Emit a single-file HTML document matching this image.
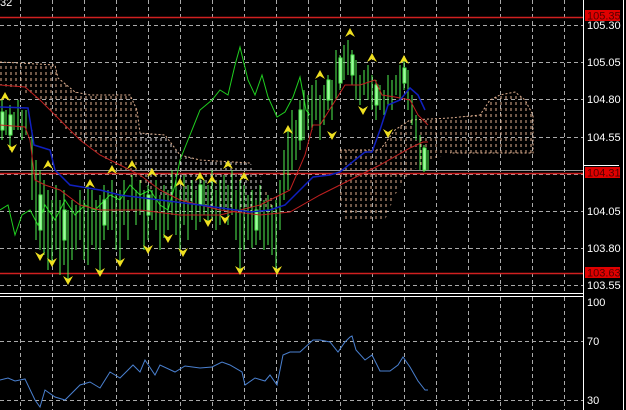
<!DOCTYPE html>
<html><head><style>
html,body{margin:0;padding:0;background:#000;width:626px;height:410px;overflow:hidden}
svg{display:block}
text{font-family:"Liberation Sans",sans-serif;font-size:11px}
</style></head><body>
<svg width="626" height="410" xmlns="http://www.w3.org/2000/svg">
<defs>
<pattern id="cl" width="5" height="6" patternUnits="userSpaceOnUse"><line x1="1" y1="0" x2="1" y2="3" stroke="#e0b090" stroke-width="1"/></pattern>
<pattern id="cw" width="5" height="6" patternUnits="userSpaceOnUse"><line x1="1" y1="0" x2="1" y2="3" stroke="#d8d0d0" stroke-width="1"/></pattern>
</defs>
<rect width="626" height="410" fill="#000"/>
<g stroke="#aaa" stroke-width="1" stroke-dasharray="4,3">
<path d="M20.5 0V292M52.5 0V292M84.5 0V292M116.5 0V292M148.5 0V292M180.5 0V292M212.5 0V292M244.5 0V292M276.5 0V292M308.5 0V292M340.5 0V292M372.5 0V292M404.5 0V292M436.5 0V292M468.5 0V292M500.5 0V292M532.5 0V292M564.5 0V292"/>
<path d="M20.5 297V410M52.5 297V410M84.5 297V410M116.5 297V410M148.5 297V410M180.5 297V410M212.5 297V410M244.5 297V410M276.5 297V410M308.5 297V410M340.5 297V410M372.5 297V410M404.5 297V410M436.5 297V410M468.5 297V410M500.5 297V410M532.5 297V410M564.5 297V410"/>
<path d="M0 25.5H583M0 62.5H583M0 99.5H583M0 137.5H583M0 174.5H583M0 211.5H583M0 248.5H583M0 285.5H583M0 341.5H583M0 400.5H583"/>
</g>
<polygon points="0,62 55,65 58,78 75,92 90,95 130,95 137,110 140,133 165,135 180,155 200,160 250,163 258,175 265,190 280,205 255,212 200,200 160,195 120,170 100,155 80,140 60,125 40,100 20,90 0,85" fill="url(#cl)"/>
<polygon points="140,133 165,135 180,155 200,160 250,163 262,178 265,200 250,212 200,205 160,195 140,175 135,150" fill="url(#cw)"/>
<polygon points="340,150 380,150 395,130 410,120 450,118 480,115 490,100 500,95 515,92 525,100 533,115 533,153 450,153 430,160 410,172 395,195 385,220 345,220 340,200" fill="url(#cl)"/>
<polyline points="340,150 380,150 395,130 410,120 450,118 480,115 490,100 500,95 515,92 525,100 533,115 533,153 450,153" fill="none" stroke="#e0b090" stroke-width="1" stroke-dasharray="2,2"/>
<polyline points="0,62 55,65 58,78 75,92 90,95 130,95 137,110 140,133 165,135 180,155 200,160 250,163" fill="none" stroke="#e0b090" stroke-width="1" stroke-dasharray="2,2"/>
<path d="M0 17.5H583M0 273.5H583" stroke="#d02020" stroke-width="1.5"/>
<path d="M0 170.5H583" stroke="#999" stroke-width="1"/>
<path d="M0 173.5H583" stroke="#d02020" stroke-width="1.5"/>
<polyline points="0,210 8,205 15,235 22,215 30,210 38,225 45,205 55,220 65,200 75,215 85,205 95,210 110,195 120,200 130,185 140,195 150,190 160,205 168,210 175,185 180,160 190,135 200,110 212,100 220,90 228,95 235,65 240,47 248,80 255,95 262,75 268,97 277,117 285,112 293,97 300,77 306,110 310,115" fill="none" stroke="#20d020" stroke-width="1"/>
<g stroke="#50f050" stroke-width="1">
<path d="M2 100V140M6 110V135M10 105V150M14 112V130M18 100V130M22 110V140M26 110V135M32 130V200M36 160V240M40 170V250M44 180V255M48 190V270M52 200V262M56 185V250M60 200V275M64 190V265M68 210V280M72 200V260M76 205V250M80 190V240M84 200V260M88 185V265M92 190V245M96 200V250M100 195V272M104 185V240M108 190V230M112 180V230M116 195V250M120 190V262M124 180V225M128 200V240M132 175V210M136 190V225M140 180V215M144 190V250M148 185V240M152 190V220M156 180V230M160 195V250M164 185V238M168 190V230M172 170V215M176 180V235M180 190V252M184 175V225M188 185V240M192 180V220M196 190V230M200 175V222M204 180V215M208 185V222M212 170V220M216 190V230M220 180V225M224 175V210M228 185V225M232 170V215M236 190V240M240 180V270M244 185V250M248 195V240M252 190V248M256 200V245M260 185V240M264 200V250M268 195V245M272 205V255M276 200V270M280 180V230M284 150V200M288 130V190M292 110V170M296 120V160M300 100V150M304 90V140M308 95V130M312 85V130M316 80V120M320 95V140M324 85V125M328 75V110M332 80V120M336 50V100M340 55V90M344 45V80M348 40V75M352 50V85M356 60V100M360 75V105M364 70V95M368 65V100M372 75V110M376 80V120M380 85V110M384 90V115M388 75V105M392 80V110M396 75V95M400 65V100M404 60V90M408 70V110M412 95V125M416 115V140M420 135V170M424 145V172M428 150V170"/>
</g>
<g fill="#a0f8a0" stroke="#50f050" stroke-width="1">
<rect x="1" y="112" width="3" height="18"/><rect x="9" y="115" width="3" height="20"/><rect x="39" y="195" width="3" height="35"/><rect x="63" y="210" width="3" height="30"/><rect x="103" y="200" width="3" height="25"/><rect x="147" y="195" width="3" height="20"/><rect x="199" y="185" width="3" height="20"/><rect x="255" y="210" width="3" height="20"/><rect x="299" y="110" width="3" height="30"/><rect x="327" y="80" width="3" height="20"/><rect x="339" y="58" width="3" height="25"/><rect x="351" y="55" width="3" height="20"/><rect x="375" y="85" width="3" height="20"/><rect x="403" y="68" width="3" height="15"/><rect x="423" y="148" width="3" height="22"/>
</g>
<polyline points="0,85 25,87 40,100 60,120 80,140 100,155 120,165 140,175 160,190 180,200 220,210 260,215 290,212 320,195 350,180 380,165 410,148 423,142 428,142" fill="none" stroke="#c02020" stroke-width="1"/>
<polyline points="0,125 25,127 30,140 35,180 45,185 60,190 80,205 100,210 140,210 180,215 220,215 260,205 280,195 290,190 305,155 313,125 320,125 345,85 360,85 375,80 382,95 395,97 410,100 418,115 428,125" fill="none" stroke="#c02020" stroke-width="1"/>
<polyline points="0,107 28,108 34,145 50,150 55,170 70,185 100,190 120,195 160,200 200,205 250,212 270,210 285,205 300,190 313,177 330,175 340,172 365,152 372,152 380,130 388,105 400,100 410,88 418,95 425,110" fill="none" stroke="#1020c0" stroke-width="1.5"/>
<g fill="#f0e020">
<path d="M5 92l-5 9 5-3 5 3z"/><path d="M48 160l-5 9 5-3 5 3z"/><path d="M90 179l-5 9 5-3 5 3z"/><path d="M112 165l-5 9 5-3 5 3z"/><path d="M132 160l-5 9 5-3 5 3z"/><path d="M152 168l-5 9 5-3 5 3z"/><path d="M180 178l-5 9 5-3 5 3z"/><path d="M200 172l-5 9 5-3 5 3z"/><path d="M212 175l-5 9 5-3 5 3z"/><path d="M228 160l-5 9 5-3 5 3z"/><path d="M244 172l-5 9 5-3 5 3z"/><path d="M288 125l-5 9 5-3 5 3z"/><path d="M320 70l-5 9 5-3 5 3z"/><path d="M350 28l-5 9 5-3 5 3z"/><path d="M372 53l-5 9 5-3 5 3z"/><path d="M404 55l-5 9 5-3 5 3z"/>
</g>
<g fill="#f0e020">
<path d="M12 153l-5-9 5 3 5-3z"/><path d="M40 261l-5-9 5 3 5-3z"/><path d="M52 267l-5-9 5 3 5-3z"/><path d="M68 285l-5-9 5 3 5-3z"/><path d="M100 277l-5-9 5 3 5-3z"/><path d="M120 267l-5-9 5 3 5-3z"/><path d="M148 254l-5-9 5 3 5-3z"/><path d="M168 243l-5-9 5 3 5-3z"/><path d="M183 257l-5-9 5 3 5-3z"/><path d="M208 227l-5-9 5 3 5-3z"/><path d="M225 224l-5-9 5 3 5-3z"/><path d="M240 275l-5-9 5 3 5-3z"/><path d="M277 275l-5-9 5 3 5-3z"/><path d="M363 115l-5-9 5 3 5-3z"/><path d="M332 140l-5-9 5 3 5-3z"/><path d="M388 138l-5-9 5 3 5-3z"/>
</g>
<path d="M0 293.5H583M0 296.5H583" stroke="#fff" stroke-width="1"/>
<polyline points="0,380 8,378 15,381 25,379 35,400 40,407 45,390 55,397 65,400 80,385 90,382 100,388 110,372 120,378 133,365 140,372 145,360 155,375 160,365 175,372 185,366 200,368 212,367 222,362 230,365 242,372 245,385 255,378 265,381 270,375 277,385 283,355 290,352 300,352 313,340 320,340 330,342 338,352 345,342 350,337 352,336 356,350 365,360 372,355 380,371 390,371 398,365 403,357 410,367 418,381 425,390 428,390" fill="none" stroke="#4a80d0" stroke-width="1"/>
<rect x="584" y="0" width="42" height="410" fill="#000"/>
<path d="M583.5 0V410M623.5 0V410" stroke="#fff" stroke-width="1"/>
<g fill="#fff">
<text x="587" y="29">105.30</text><text x="587" y="66">105.05</text><text x="587" y="103">104.80</text><text x="587" y="141">104.55</text><text x="587" y="215">104.05</text><text x="587" y="252">103.80</text><text x="587" y="289">103.55</text>
<text x="587" y="306">100</text><text x="587" y="345">70</text><text x="587" y="404">30</text>
</g>
<path d="M584 165.5H619" stroke="#fff"/>
<rect x="585" y="10" width="35" height="11" fill="#e00000"/><rect x="585" y="167" width="35" height="11" fill="#e00000"/><rect x="585" y="267" width="35" height="11" fill="#e00000"/>
<g fill="#500" style="font-size:10px">
<text x="587" y="19.5">105.35</text><text x="587" y="176.5">104.31</text><text x="587" y="276.5">103.63</text>
</g>
<text x="0" y="6" fill="#fff">32</text>
</svg>
</body></html>
